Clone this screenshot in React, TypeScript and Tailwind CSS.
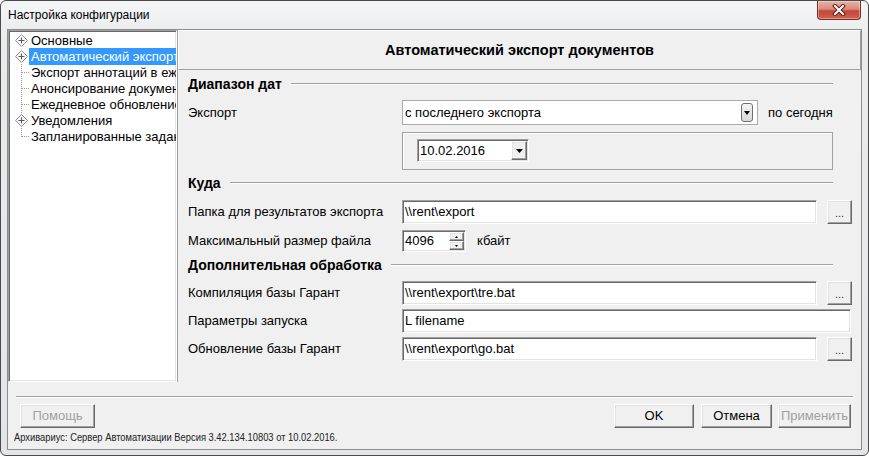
import React from "react";

const sunken =
  "border border-t-[#a0a0a0] border-l-[#a0a0a0] border-r-white border-b-white shadow-[inset_1px_1px_0_#696969,inset_-1px_-1px_0_#e3e3e3] bg-white";
const raised =
  "border border-t-white border-l-white border-r-[#696969] border-b-[#696969] shadow-[inset_-1px_-1px_0_#a0a0a0,inset_1px_1px_0_#e3e3e3] bg-[#f0f0f0]";

type TreeKind = "diamond" | "branch" | "last" | "diamondLine";

const tree: { label: string; kind: TreeKind; selected?: boolean }[] = [
  { label: "Основные", kind: "diamond" },
  { label: "Автоматический экспорт документов", kind: "diamond", selected: true },
  { label: "Экспорт аннотаций в ежедневный файл", kind: "branch" },
  { label: "Анонсирование документов", kind: "branch" },
  { label: "Ежедневное обновление", kind: "branch" },
  { label: "Уведомления", kind: "diamondLine" },
  { label: "Запланированные задания", kind: "last" },
];

function TreeIcon({ kind }: { kind: TreeKind }) {
  const diamond = kind === "diamond" || kind === "diamondLine";
  return (
    <svg width="16" height="16" viewBox="0 0 16 16" className="shrink-0">
      {kind !== "diamond" && (
        <g stroke="#9a9a9a" strokeDasharray="1 1">
          <line x1="8.5" y1="0" x2="8.5" y2={kind === "last" ? 9 : 16} />
          {!diamond && <line x1="9" y1="8.5" x2="16" y2="8.5" />}
        </g>
      )}
      {diamond && (
        <g>
          <path d="M8.5 2.5 L14.5 8.5 L8.5 14.5 L2.5 8.5 Z" fill="#fbfbfb" stroke="#8c8c8c" />
          <path d="M5.5 8.5 H11.5 M8.5 5.5 V11.5" stroke="#5a5a5a" />
        </g>
      )}
    </svg>
  );
}

function Etched({ className = "" }: { className?: string }) {
  return (
    <div
      className={`h-[2px] border-t border-b border-t-[#a0a0a0] border-b-white ${className}`}
    />
  );
}

function Section({ title }: { title: string }) {
  return (
    <div className="flex h-4 w-[645px] items-center gap-[9px]">
      <span className="text-[14px] font-bold leading-4">{title}</span>
      <Etched className="flex-1" />
    </div>
  );
}

function DownArrow({ w = 7 }: { w?: number }) {
  return (
    <svg width={w} height="4" viewBox={`0 0 ${w} 4`}>
      <path d={`M0 0 H${w} L${w / 2} 4 Z`} fill="#000" />
    </svg>
  );
}

function Browse() {
  return (
    <button className={`${raised} ml-[10px] h-[24px] w-[25px] pt-[3px] text-[11px] leading-none text-[#333]`}>
      ...
    </button>
  );
}

function Row({ label, children, className = "" }: { label: string; children: React.ReactNode; className?: string }) {
  return (
    <div className={`flex items-center ${className}`}>
      <span className="w-[214px] shrink-0 leading-4">{label}</span>
      {children}
    </div>
  );
}

function PathInput({ value, wide }: { value: string; wide?: boolean }) {
  return (
    <div className={`${sunken} flex h-[24px] items-center pl-[2px] ${wide ? "w-[449px]" : "w-[415px]"}`}>
      {value}
    </div>
  );
}

export default function App() {
  return (
    <div className="h-[456px] w-[869px] overflow-hidden bg-white font-['Liberation_Sans',Arial,sans-serif] text-[13px] text-black">
      <div className="relative flex h-[456px] w-[869px] flex-col rounded-[6px] border border-[#4a4a4a] bg-[linear-gradient(180deg,#f5f6f7_0%,#e9ebed_8%,#e3e5e8_100%)]">
        <div className="flex h-[28px] items-center pl-[7px] text-[12px]">Настройка конфигурации</div>
        <div className="absolute right-[7px] top-0 flex h-[19px] w-[44px] items-center justify-center rounded-b-[4px] border border-t-0 border-[#7a2f26] bg-[linear-gradient(180deg,#eab2a6_0%,#d98b7e_45%,#c5463a_55%,#d0604f_100%)] shadow-[inset_0_0_0_1px_rgba(255,255,255,0.35)]">
          <svg width="14" height="12" viewBox="0 0 14 12">
            <path d="M3 2 L11 10 M11 2 L3 10" stroke="#5a1e18" strokeWidth="4" strokeLinecap="square" />
            <path d="M3 2 L11 10 M11 2 L3 10" stroke="#fff" strokeWidth="2" strokeLinecap="square" />
          </svg>
        </div>

        <div className="mx-[6px] mb-[5px] flex flex-1 flex-col border border-[#8c8c8c] bg-[#f0f0f0]">
          <div className="flex h-[352px]">
            {/* tree */}
            <div className={`${sunken} h-full w-[169px] shrink-0 overflow-hidden pl-[4px] pt-[1px]`}>
              {tree.map((n) => (
                <div key={n.label} className="flex h-4 items-center whitespace-nowrap">
                  <TreeIcon kind={n.kind} />
                  <span
                    className={`flex-1 overflow-hidden pl-[2px] pt-[1px] leading-4 ${n.selected ? "bg-[#3399ff] text-white" : ""}`}
                  >
                    {n.label}
                  </span>
                </div>
              ))}
            </div>

            {/* right panel */}
            <div className="flex flex-1 flex-col border-l border-l-[#a0a0a0]">
              <div className="flex h-[40px] items-center justify-center border border-t-white border-l-white border-r-[#a0a0a0] border-b-[#a0a0a0] pt-[2px] text-[14.5px] font-bold">
                Автоматический экспорт документов
              </div>

              <div className="flex flex-col pl-[10px]">
                <div className="mt-[6px]">
                  <Section title="Диапазон дат" />
                </div>
                <Row label="Экспорт" className="mt-[8px] h-[25px]">
                  <div className="flex h-[25px] w-[356px] items-center border border-[#ababab] bg-white pl-[2px] pr-[4px]">
                    <span className="flex-1">с последнего экспорта</span>
                    <div className="flex h-[19px] w-[12px] items-center justify-center rounded-[3px] border border-[#6f6f6f] bg-[linear-gradient(180deg,#f4f4f4,#d8d8d8)]">
                      <DownArrow w={6} />
                    </div>
                  </div>
                  <span className="ml-[10px]">по сегодня</span>
                </Row>
                <div className="ml-[214px] mt-[7px] h-[38px] w-[431px] border border-[#a0a0a0] shadow-[inset_1px_1px_0_#fff] pl-[14px] pt-[6px]">
                  <div className={`${sunken} flex h-[23px] w-[112px] items-center pl-[2px] pr-[1px]`}>
                    <span className="flex-1">10.02.2016</span>
                    <div className={`${raised} flex h-[19px] w-[16px] items-center justify-center`}>
                      <DownArrow />
                    </div>
                  </div>
                </div>

                <div className="mt-[5px]">
                  <Section title="Куда" />
                </div>
                <Row label="Папка для результатов экспорта" className="mt-[9px]">
                  <PathInput value="\\rent\export" />
                  <Browse />
                </Row>
                <Row label="Максимальный размер файла" className="mt-[6px]">
                  <div className={`${sunken} flex h-[22px] w-[64px] items-center pl-[2px] pr-[1px]`}>
                    <span className="flex-1">4096</span>
                    <div className="flex h-[18px] w-[15px] flex-col">
                      <div className={`${raised} flex h-[9px] items-center justify-center`}>
                        <svg width="3" height="2" viewBox="0 0 3 2"><path d="M0 2 H3 L1.5 0 Z" fill="#000" /></svg>
                      </div>
                      <div className={`${raised} flex h-[9px] items-center justify-center`}>
                        <svg width="3" height="2" viewBox="0 0 3 2"><path d="M0 0 H3 L1.5 2 Z" fill="#000" /></svg>
                      </div>
                    </div>
                  </div>
                  <span className="ml-[11px]">кбайт</span>
                </Row>

                <div className="mt-[5px]">
                  <Section title="Дополнительная обработка" />
                </div>
                <Row label="Компиляция базы Гарант" className="mt-[8px]">
                  <PathInput value="\\rent\export\tre.bat" />
                  <Browse />
                </Row>
                <Row label="Параметры запуска" className="mt-[4px]">
                  <PathInput value="L filename" wide />
                </Row>
                <Row label="Обновление базы Гарант" className="mt-[4px]">
                  <PathInput value="\\rent\export\go.bat" />
                  <Browse />
                </Row>
              </div>
            </div>
          </div>

          {/* bottom */}
          <Etched className="mx-[8px] mt-[14px]" />
          <div className="mt-[6px] flex h-[24px] pl-[12px] pr-[10px]">
            <button className={`${raised} w-[75px] text-[#a0a0a0]`}>Помощь</button>
            <div className="ml-auto flex gap-[7px]">
              <button className={`${raised} w-[80px]`}>OK</button>
              <button className={`${raised} w-[71px]`}>Отмена</button>
            </div>
            <button className={`${raised} ml-[6px] w-[73px] text-[#a0a0a0]`}>Применить</button>
          </div>
          <div className="mt-[2px] h-[15px] pl-[6px] text-[11px] leading-[15px] text-[#222]">
            <span className="inline-block origin-left scale-x-[0.85] whitespace-nowrap">
              Архивариус: Сервер Автоматизации Версия 3.42.134.10803 от 10.02.2016.
            </span>
          </div>
        </div>
      </div>
    </div>
  );
}
